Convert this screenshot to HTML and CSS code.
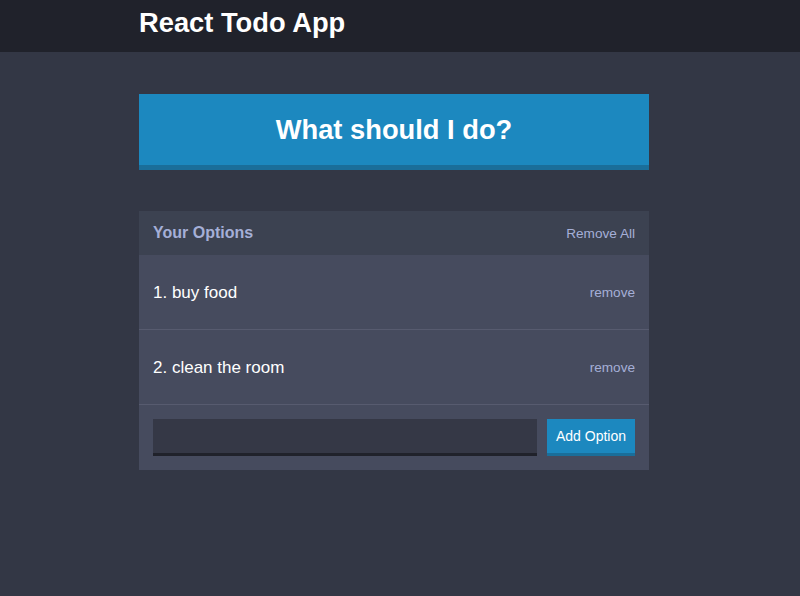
FILE: index.html
```html
<!DOCTYPE html>
<html>
<head>
<meta charset="utf-8">
<link rel="stylesheet" href="styles.css">
</head>
<body>
<header class="header">
  <div class="container">
    <h1 class="header-title">React Todo App</h1>
  </div>
</header>
<main class="container main">
  <div class="action">
    <h2 class="action-title">What should I do?</h2>
  </div>
  <section class="widget">
    <div class="widget-header">
      <h3 class="widget-title">Your Options</h3>
      <span class="link">Remove All</span>
    </div>
    <div class="option">
      <p class="option-text">1. buy food</p>
      <span class="link">remove</span>
    </div>
    <div class="option">
      <p class="option-text">2. clean the room</p>
      <span class="link">remove</span>
    </div>
    <form class="add-option">
      <input class="add-input" type="text">
      <button class="add-button" type="button">Add Option</button>
    </form>
  </section>
</main>
</body>
</html>
```
FILE: styles.css
```css
* { box-sizing: border-box; }
body {
  margin: 0;
  background: #333745;
  font-family: "Liberation Sans", Arial, sans-serif;
  color: #fff;
}
.container {
  width: 510px;
  margin-left: calc(50% - 261px);
}
.header {
  background: #20222b;
  height: 52px;
}
.header-title {
  margin: 0;
  font-size: 27.3px;
  line-height: 46px;
  font-weight: bold;
}
.main {
  padding-top: 42px;
}
.action {
  background: #1c88bf;
  border-bottom: 5px solid #1a6e9a;
  height: 76px;
  display: flex;
  align-items: center;
  justify-content: center;
}
.action-title {
  margin: 0;
  font-size: 27.3px;
  font-weight: bold;
}
.widget {
  margin-top: 41px;
  background: #464b5e;
}
.widget-header {
  background: #3c4251;
  height: 44px;
  padding: 0 14px;
  display: flex;
  align-items: center;
  justify-content: space-between;
}
.widget-title {
  margin: 0;
  font-size: 16px;
  color: #a5afd7;
}
.link {
  font-size: 13.6px;
  color: #a5afd7;
}
.option {
  height: 75px;
  padding: 0 14px;
  border-bottom: 1px solid #575b6f;
  display: flex;
  align-items: center;
  justify-content: space-between;
}
.option-text {
  margin: 0;
  padding-top: 2px;
  font-size: 17px;
  color: #fff;
}
.add-option {
  margin: 0;
  padding: 14px;
  display: flex;
  gap: 10px;
}
.add-input {
  flex: 1;
  height: 37px;
  background: #353846;
  border: none;
  border-bottom: 3px solid #20222b;
  color: #fff;
  font-family: inherit;
  outline: none;
}
.add-button {
  width: 88px;
  height: 37px;
  background: #1c88bf;
  border: none;
  border-bottom: 3px solid #1a6e9a;
  color: #fff;
  font-family: inherit;
  font-size: 14px;
  padding: 0;
}
```
